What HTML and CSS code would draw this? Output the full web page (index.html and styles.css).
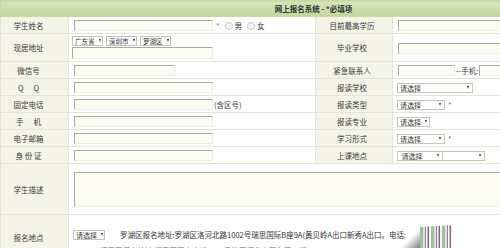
FILE: index.html
```html
<!DOCTYPE html>
<html lang="zh">
<head>
<meta charset="utf-8">
<link rel="stylesheet" href="styles.css">
</head>
<body>
<div class="page">
<table class="form">
  <colgroup>
    <col class="c1"><col class="c2"><col class="c3"><col class="c4">
  </colgroup>
  <tr class="head"><th colspan="4">网上报名系统 - *必填项</th></tr>
  <tr class="r">
    <td class="lbl">学生姓名</td>
    <td class="val"><span class="inp w139"></span><span class="star">*</span><span class="radio"></span><span class="rt">男</span><span class="radio"></span><span class="rt">女</span></td>
    <td class="lbl2">目前最高学历</td>
    <td class="val2"><span class="inp w140"></span></td>
  </tr>
  <tr class="r2">
    <td class="lbl">现居地址</td>
    <td class="val addr">
      <div class="sels"><span class="sel">广东省<i></i></span><span class="sel">深圳市<i></i></span><span class="sel">罗湖区<i></i></span></div>
      <span class="inp w140 tall"></span>
    </td>
    <td class="lbl2">毕业学校</td>
    <td class="val2"><span class="inp w140"></span></td>
  </tr>
  <tr class="r">
    <td class="lbl">微信号</td>
    <td class="val"><span class="inp w101"></span></td>
    <td class="lbl2">紧急联系人</td>
    <td class="val2"><span class="inp w57"></span><span class="txt">--手机:</span><span class="inp w57"></span></td>
  </tr>
  <tr class="r">
    <td class="lbl">Q&nbsp;&nbsp;&nbsp;&nbsp;&nbsp;&nbsp;Q</td>
    <td class="val"><span class="inp w139"></span></td>
    <td class="lbl2">报读学校</td>
    <td class="val2"><span class="sel s76">请选择<i></i></span></td>
  </tr>
  <tr class="r">
    <td class="lbl">固定电话</td>
    <td class="val"><span class="inp w139"></span><span class="txt">(含区号)</span></td>
    <td class="lbl2">报读类型</td>
    <td class="val2"><span class="sel s48">请选择<i></i></span><span class="star">*</span></td>
  </tr>
  <tr class="r">
    <td class="lbl">手&nbsp;&nbsp;&nbsp;&nbsp;&nbsp;&nbsp;机</td>
    <td class="val"><span class="inp w139"></span></td>
    <td class="lbl2">报读专业</td>
    <td class="val2"><span class="sel s33">请选择<i></i></span></td>
  </tr>
  <tr class="r">
    <td class="lbl">电子邮箱</td>
    <td class="val"><span class="inp w139"></span></td>
    <td class="lbl2">学习形式</td>
    <td class="val2"><span class="sel s48">请选择<i></i></span><span class="star">*</span></td>
  </tr>
  <tr class="r">
    <td class="lbl">身&nbsp;份&nbsp;证</td>
    <td class="val"><span class="inp w139"></span></td>
    <td class="lbl2">上课地点</td>
    <td class="val2"><span class="sel s46">&nbsp;请选择<i></i></span><span class="sel s43"><i></i></span></td>
  </tr>
  <tr class="r9">
    <td class="lbl">学生描述</td>
    <td class="val" colspan="3"><span class="area"></span></td>
  </tr>
  <tr class="r10">
    <td class="lbl">报名地点</td>
    <td class="val place" colspan="3">
      <div class="pl"><span class="sel s32">请选择<i></i></span><span class="addrtxt">罗湖区报名地址:罗湖区洛河北路1002号瑞思国际B座9A(黄贝岭A出口新秀A出口。电话:</span></div>
      <div class="pl2">福田区报名地址:福田区深南大道6008号特区报业大厦东区23楼</div>
    </td>
  </tr>
</table>
<div class="curl"><span class="tip"></span><span class="stripes"></span></div>
</div>
</body>
</html>
```
FILE: styles.css
```css
html, body {
  margin: 0;
  padding: 0;
  background: #fff;
  overflow: hidden;
}
.page {
  position: relative;
  width: 500px;
  height: 248px;
  overflow: hidden;
  font-family: "Noto Sans CJK SC", "Noto Sans", sans-serif;
  font-size: 7.5px;
  color: #3a3a3a;
}
.form {
  width: 626px;
  table-layout: fixed;
  border-collapse: collapse;
}
.c1 { width: 68px; }
.c2 { width: 247px; }
.c3 { width: 77px; }
.c4 { width: 234px; }
.form td, .form th {
  border: 1px solid #e4e4d6;
  padding: 0;
  vertical-align: middle;
  white-space: nowrap;
  overflow: hidden;
}
.head th {
  height: 15px;
  background: linear-gradient(#d6e5b8, #c3d79c);
  border-color: #c8d8a8;
  font-weight: bold;
  font-size: 7.5px;
  color: #333;
  text-align: center;
  line-height: 15px;
}
.r td { height: 16px; }
.r2 td { height: 27px; }
.r9 td { height: 50px; }
.r10 td { height: 44px; }
.lbl {
  background: #f3f3e6;
  text-align: center;
  padding-right: 12px !important;
}
.r10 .lbl {
  vertical-align: top;
  padding-top: 17px !important;
}
.lbl2 {
  background: #f3f3e6;
  text-align: center;
  padding-right: 4px !important;
}
.val, .val2 {
  background: #fff;
  padding-left: 5px !important;
}
.inp {
  display: inline-block;
  vertical-align: middle;
  height: 11px;
  box-sizing: border-box;
  background: #fcfcf3;
  border-top: 1px solid #a9a9a0;
  border-left: 1px solid #a9a9a0;
  border-right: 1px solid #ececdf;
  border-bottom: 1px solid #ececdf;
}
.w139 { width: 139px; }
.w140 { width: 141px; }
.w101 { width: 101px; }
.w57 { width: 57px; }
.tall { height: 12px; }
.star {
  display: inline-block;
  vertical-align: middle;
  margin: 0 3px;
  color: #777;
}
.radio {
  display: inline-block;
  vertical-align: middle;
  width: 6px;
  height: 6px;
  border-radius: 50%;
  border: 1px solid #c8c8c8;
  background: #f4f4f4;
  margin: 0 2px 0 2px;
}
.rt {
  display: inline-block;
  vertical-align: middle;
  margin-right: 3px;
}
.txt {
  display: inline-block;
  vertical-align: middle;
  margin: 0 1px;
}
.addr { padding-left: 3px !important; }
.sels {
  display: flex;
  gap: 3px;
  margin-bottom: 1px;
}
.sel {
  display: inline-flex;
  align-items: center;
  justify-content: space-between;
  vertical-align: middle;
  box-sizing: border-box;
  height: 10px;
  padding: 0 3px 0 2px;
  border: 1px solid #c4c4bb;
  background: #fff;
  font-size: 7px;
  line-height: 8px;
  color: #333;
}
.sel i {
  display: block;
  flex: none;
  width: 0;
  height: 0;
  margin-left: 4px;
  border-left: 1.5px solid transparent;
  border-right: 1.5px solid transparent;
  border-top: 3px solid #333;
}
.sels .sel { width: 31px; font-size: 6.5px; }
.s76 { width: 76px; }
.s48 { width: 48px; }
.s33 { width: 33px; }
.s46 { width: 46px; }
.s43 { width: 43px; justify-content: flex-end; margin-left: 1px; }
.s32 { width: 32px; }
.val2 .sel { margin-left: -1px; }
.area {
  display: block;
  width: 560px;
  height: 35px;
  box-sizing: border-box;
  background: #fcfcf3;
  border-top: 1px solid #a9a9a0;
  border-left: 1px solid #a9a9a0;
  border-right: 1px solid #ececdf;
  border-bottom: 1px solid #ececdf;
}
.place {
  vertical-align: top !important;
  padding-top: 14px !important;
  padding-left: 4px !important;
}
.pl {
  display: flex;
  align-items: center;
  height: 11px;
}
.addrtxt {
  margin-left: 15px;
  color: #333;
}
.pl2 {
  margin-left: 27px;
  margin-top: 5px;
  color: #666;
}
.curl {
  position: absolute;
  left: 398px;
  top: 225px;
  width: 56px;
  height: 24px;
}
.tip {
  position: absolute;
  left: 0;
  top: 0;
  width: 24px;
  height: 24px;
  background: linear-gradient(135deg, rgba(255,255,255,0) 50%, #e8e8e8 60%, #9a9a9a 85%, #707070);
  clip-path: polygon(100% 0, 100% 100%, 0 100%);
}
.stripes {
  position: absolute;
  left: 22px;
  top: 0;
  width: 32px;
  height: 24px;
  clip-path: polygon(0 8%, 100% 0, 100% 100%, 0 100%);
  background: repeating-linear-gradient(90deg,
    #9cc49a 0, #9cc49a 3px,
    #e8d8e8 3px, #e8d8e8 5px,
    #888 5px, #888 6px,
    #fff 6px, #fff 7px,
    #c8a8c8 7px, #c8a8c8 8px,
    #777 8px, #777 9px,
    #f4f4f4 9px, #f4f4f4 11px);
}
```
